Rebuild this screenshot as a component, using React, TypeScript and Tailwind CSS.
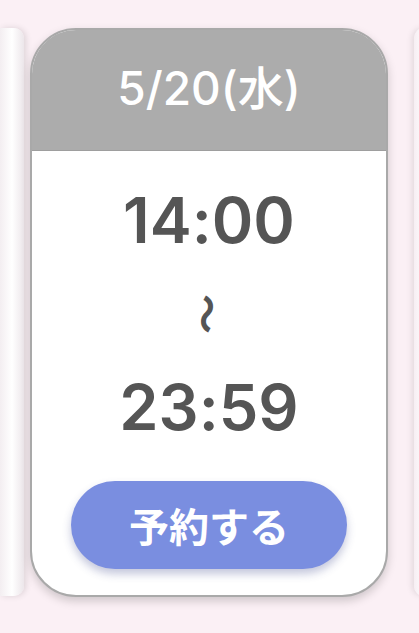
export default function App() {
  return (
    <div
      className="w-[419px] h-[633px] overflow-hidden bg-[#fbf0f5] flex items-start pt-[28px]"
      style={{ fontFamily: 'Inter, "Noto Sans CJK JP", sans-serif' }}
    >
      {/* neighbour card, left */}
      <div className="w-[24px] h-[568px] shrink-0 rounded-r-[10px] bg-gradient-to-r from-[#f3eef1] via-white to-[#ece6ea] shadow-[2px_0_6px_rgba(0,0,0,0.12)]" />

      <div className="ml-[6px] w-[358px] shrink-0 rounded-[46px] border-2 border-[#a9a9a9] bg-white overflow-hidden shadow-[0_4px_10px_rgba(0,0,0,0.18)]">
        <div className="h-[121px] bg-[#acacac] flex items-center justify-center border-b border-[#9e9e9e]">
          <span className="text-white text-[46px] font-medium leading-none -mt-[4px] [font-feature-settings:'calt'_0]">5/20(水)</span>
        </div>
        <div className="flex flex-col items-center pt-[38px] pb-[26px] [font-feature-settings:'calt'_0]">
          <span className="text-[#555555] text-[63px] font-semibold leading-none">14:00</span>
          <span className="text-[#555555] text-[40px] font-bold leading-none rotate-90 mt-[42px]" style={{ fontFamily: '"Noto Sans CJK JP", sans-serif' }}>〜</span>
          <span className="text-[#555555] text-[63px] font-semibold leading-none mt-[42px]">23:59</span>
          <button className="mt-[42px] w-[276px] h-[88px] rounded-full bg-[#7a8ee0] text-white text-[40px] font-bold shadow-[0_5px_8px_rgba(60,70,140,0.3)]" style={{ fontFamily: '"Noto Sans CJK JP", sans-serif' }}>
            予約する
          </button>
        </div>
      </div>

      <div className="ml-[26px] w-[12px] h-[568px] shrink-0 rounded-l-[10px] bg-gradient-to-r from-[#f7eef3] to-white shadow-[-2px_0_6px_rgba(0,0,0,0.1)]" />
    </div>
  );
}
